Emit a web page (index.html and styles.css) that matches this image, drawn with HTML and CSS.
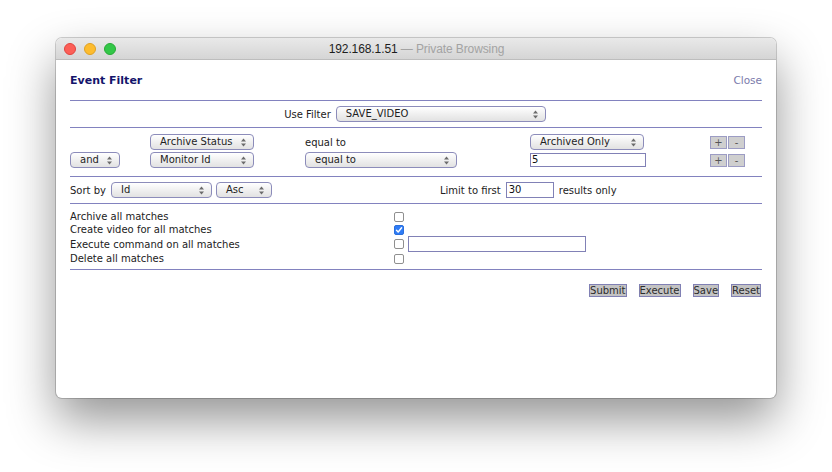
FILE: index.html
```html
<!DOCTYPE html>
<html>
<head>
<meta charset="utf-8">
<title>Event Filter</title>
<link rel="stylesheet" href="styles.css">
</head>
<body>
<div class="window">
  <div class="titlebar">
    <div class="lights">
      <span class="light red"></span>
      <span class="light yellow"></span>
      <span class="light green"></span>
    </div>
    <div class="title"><span class="host">192.168.1.51</span><span class="mode"> — Private Browsing</span></div>
  </div>
  <div class="content">
    <div class="header">
      <h2 class="heading">Event Filter</h2>
      <a class="close">Close</a>
    </div>

    <div class="usefilter section">
      <span class="label">Use Filter</span>
      <span class="sel w-filter"><span class="sel-text">SAVE_VIDEO</span><svg class="arr" width="7" height="9" viewBox="0 0 7 9"><polygon points="1,3.6 3.5,0.6 6,3.6"/><polygon points="1,5.4 3.5,8.4 6,5.4"/></svg></span>
    </div>

    <div class="terms section">
      <div class="term">
        <span class="cell"></span>
        <span class="cell"><span class="sel w-attr"><span class="sel-text">Archive Status</span><svg class="arr" width="7" height="9" viewBox="0 0 7 9"><polygon points="1,3.6 3.5,0.6 6,3.6"/><polygon points="1,5.4 3.5,8.4 6,5.4"/></svg></span></span>
        <span class="cell"><span class="optext">equal to</span></span>
        <span class="cell"><span class="sel w-val"><span class="sel-text">Archived Only</span><svg class="arr" width="7" height="9" viewBox="0 0 7 9"><polygon points="1,3.6 3.5,0.6 6,3.6"/><polygon points="1,5.4 3.5,8.4 6,5.4"/></svg></span></span>
        <span class="cell btns"><span class="pm">+</span><span class="pm">-</span></span>
      </div>
      <div class="term">
        <span class="cell"><span class="sel w-and"><span class="sel-text">and</span><svg class="arr" width="7" height="9" viewBox="0 0 7 9"><polygon points="1,3.6 3.5,0.6 6,3.6"/><polygon points="1,5.4 3.5,8.4 6,5.4"/></svg></span></span>
        <span class="cell"><span class="sel w-attr"><span class="sel-text">Monitor Id</span><svg class="arr" width="7" height="9" viewBox="0 0 7 9"><polygon points="1,3.6 3.5,0.6 6,3.6"/><polygon points="1,5.4 3.5,8.4 6,5.4"/></svg></span></span>
        <span class="cell"><span class="sel w-op"><span class="sel-text">equal to</span><svg class="arr" width="7" height="9" viewBox="0 0 7 9"><polygon points="1,3.6 3.5,0.6 6,3.6"/><polygon points="1,5.4 3.5,8.4 6,5.4"/></svg></span></span>
        <span class="cell"><span class="txt w-five">5</span></span>
        <span class="cell btns"><span class="pm">+</span><span class="pm">-</span></span>
      </div>
    </div>

    <div class="sortrow section">
      <div class="sortgroup">
        <span class="label">Sort by</span>
        <span class="sel w-id"><span class="sel-text">Id</span><svg class="arr" width="7" height="9" viewBox="0 0 7 9"><polygon points="1,3.6 3.5,0.6 6,3.6"/><polygon points="1,5.4 3.5,8.4 6,5.4"/></svg></span>
        <span class="sel w-asc"><span class="sel-text">Asc</span><svg class="arr" width="7" height="9" viewBox="0 0 7 9"><polygon points="1,3.6 3.5,0.6 6,3.6"/><polygon points="1,5.4 3.5,8.4 6,5.4"/></svg></span>
      </div>
      <div class="limitgroup">
        <span class="label">Limit to first</span>
        <span class="txt w-limit">30</span>
        <span class="label">results only</span>
      </div>
    </div>

    <div class="actions section">
      <div class="action"><span class="alabel">Archive all matches</span><span class="cb"></span></div>
      <div class="action"><span class="alabel">Create video for all matches</span><span class="cb checked"><svg width="8" height="8" viewBox="0 0 8 8"><polyline points="1.5,4.2 3.2,6 6.6,1.8"/></svg></span></div>
      <div class="action tall"><span class="alabel">Execute command on all matches</span><span class="cb"></span><span class="txt w-cmd"></span></div>
      <div class="action"><span class="alabel">Delete all matches</span><span class="cb"></span></div>
    </div>

    <div class="buttons">
      <span class="btn">Submit</span>
      <span class="btn">Execute</span>
      <span class="btn">Save</span>
      <span class="btn">Reset</span>
    </div>
  </div>
</div>
</body>
</html>
```

FILE: styles.css
```css
html, body {
  margin: 0;
  padding: 0;
  background: #ffffff;
}
html { height: 100%; }
body {
  box-sizing: border-box;
  min-height: 100%;
  padding: 38px 56px;
  font-family: "DejaVu Sans", Verdana, sans-serif;
  font-size: 10px;
  color: #222;
  overflow: hidden;
}
.window {
  width: 720px;
  height: 360px;
  border-radius: 6px;
  background: #fff;
  overflow: hidden;
  box-shadow: 0 0 0 1px rgba(0,0,0,0.18), 0 22px 48px rgba(0,0,0,0.42);
}
.titlebar {
  height: 21px;
  border-bottom: 1px solid #bdbdbd;
  background: linear-gradient(#e9e9e9, #d5d5d5);
  position: relative;
  display: flex;
  align-items: center;
  justify-content: center;
}
.lights {
  position: absolute;
  left: 8px;
  top: 5px;
  display: flex;
  gap: 8px;
}
.light {
  width: 12px;
  height: 12px;
  border-radius: 50%;
  box-sizing: border-box;
}
.red { background: #fc5f57; border: 1px solid #e0443e; }
.yellow { background: #fdbc2e; border: 1px solid #dea123; }
.green { background: #33c748; border: 1px solid #27aa35; }
.title {
  font-family: "Liberation Sans", Arial, sans-serif;
  font-size: 12px;
  letter-spacing: -0.1px;
  padding-left: 1px;
}
.host { color: #1d1d1d; }
.mode { color: #a3a3a3; }

.content {
  padding: 0 14px;
}
.header {
  height: 40px;
  display: flex;
  align-items: center;
  justify-content: space-between;
  border-bottom: 1px solid #8282bf;
}
.heading {
  margin: 0;
  font-size: 11px;
  font-weight: bold;
  color: #14146b;
  padding-top: 1px;
}
.close {
  color: #7b7bab;
  font-size: 10.5px;
}
.section {
  border-bottom: 1px solid #8282bf;
}
.usefilter {
  height: 26px;
  display: flex;
  align-items: center;
  justify-content: center;
  gap: 5px;
  padding-right: 2px;
}
.label { white-space: nowrap; }

.sel {
  display: inline-flex;
  align-items: center;
  justify-content: space-between;
  box-sizing: border-box;
  height: 16px;
  padding: 0 6px 0 9px;
  border: 1px solid #8c8cba;
  border-radius: 4px;
  background: linear-gradient(#ffffff, #ededed 60%, #e2e2e2);
  color: #1e1e1e;
  white-space: nowrap;
}
.sel-text { line-height: 14px; }
.arr { fill: #6b6b6b; flex: none; }
.w-filter { width: 210px; }
.w-attr { width: 104px; }
.w-val { width: 114px; }
.w-and { width: 50px; }
.w-op { width: 152px; }
.w-id { width: 101px; }
.w-asc { width: 56px; }

.txt {
  display: inline-block;
  box-sizing: border-box;
  border: 1px solid #8181b6;
  background: #fff;
  height: 16px;
  line-height: 14px;
  padding-left: 1px;
  color: #111;
}
.w-five { width: 116px; height: 14px; line-height: 12px; }
.w-limit { width: 48px; padding-left: 2px; }
.w-cmd { width: 178px; }

.terms {
  padding: 6px 0 8px;
  display: flex;
  flex-direction: column;
  gap: 2px;
}
.term {
  display: grid;
  grid-template-columns: 80px 155px 225px 180px auto;
  height: 16px;
  align-items: center;
}
.cell { display: flex; align-items: center; }
.optext { padding-top: 1px; }
.btns { gap: 1px; padding-top: 1px; }
.pm {
  box-sizing: border-box;
  width: 17px;
  height: 13px;
  display: inline-flex;
  align-items: center;
  justify-content: center;
  background: #cfcfcf;
  border: 1px solid #9c9cc4;
  color: #555;
  font-size: 10px;
  line-height: 1;
}

.sortrow {
  height: 26px;
  display: grid;
  grid-template-columns: 370px auto;
  align-items: center;
}
.sortgroup { display: flex; align-items: center; }
.sortgroup .label { width: 41px; }
.sortgroup .w-asc { margin-left: 4px; }
.limitgroup { display: flex; align-items: center; gap: 4px; }
.limitgroup .w-limit { margin-left: 1px; }
.limitgroup .w-limit + .label { margin-left: 1px; }

.actions {
  padding: 6px 0 4px;
}
.action {
  height: 13px;
  display: flex;
  align-items: center;
}
.action.tall { height: 16px; }
.alabel { width: 324px; flex: none; }
.cb {
  box-sizing: border-box;
  width: 10px;
  height: 10px;
  border: 1px solid #8f8f8f;
  border-radius: 2px;
  background: #fff;
  display: inline-flex;
  align-items: center;
  justify-content: center;
}
.cb.checked {
  background: #2f7cf6;
  border-color: #2a6fdc;
}
.cb.checked polyline {
  fill: none;
  stroke: #fff;
  stroke-width: 1.4;
  stroke-linecap: round;
  stroke-linejoin: round;
}
.action .w-cmd { margin-left: 4px; }

.buttons {
  display: flex;
  justify-content: flex-end;
  gap: 12px;
  padding-top: 14px;
  padding-right: 1px;
}
.btn {
  box-sizing: border-box;
  height: 13px;
  line-height: 11px;
  padding: 0;
  background: #c3c3c3;
  border: 1px solid #8080b4;
  color: #2c2c2c;
}
```
